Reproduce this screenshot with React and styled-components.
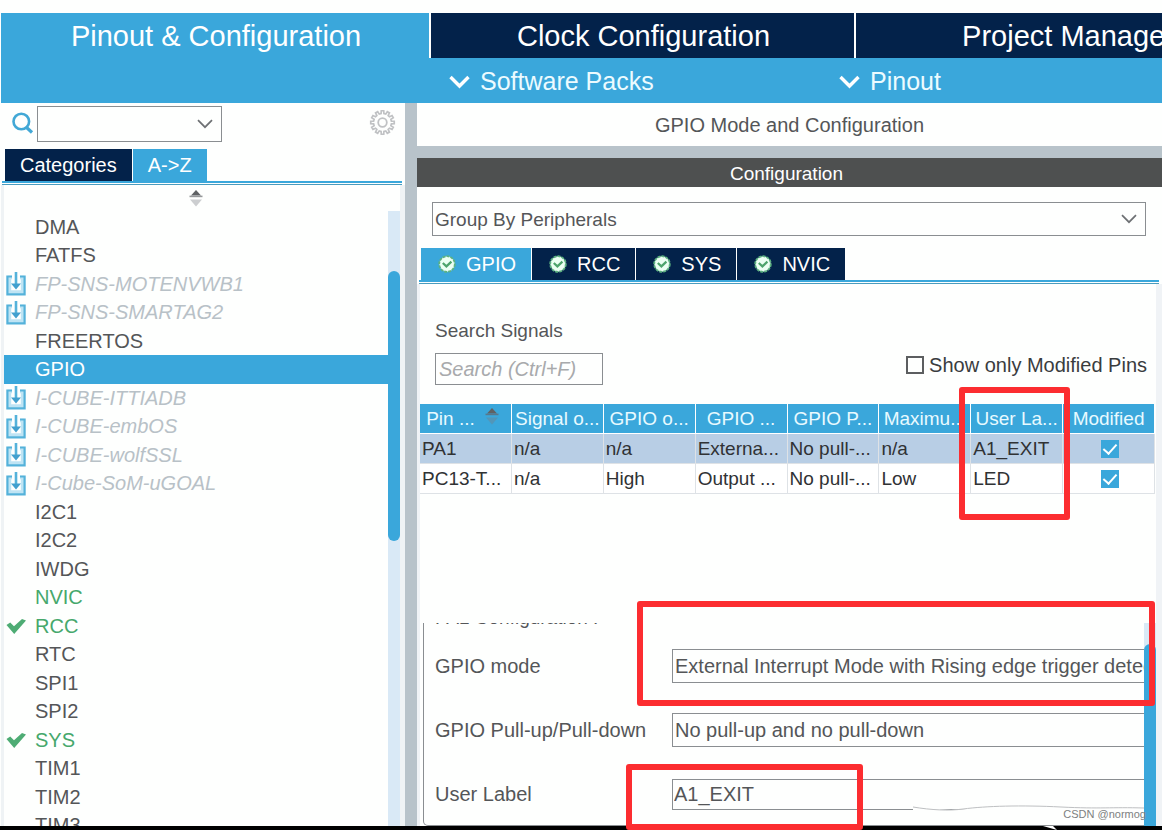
import { useState } from "react";
import styled, { createGlobalStyle, css } from "styled-components";

const BLUE = "rgb(58, 167, 219)";
const NAVY = "rgb(3, 34, 74)";
const GREY_TEXT = "rgb(84, 86, 88)";

const GlobalStyle = createGlobalStyle`
  * {
    box-sizing: border-box;
  }
  body {
    margin: 0;
    overflow: hidden;
    background-color: rgb(254, 255, 254);
  }
  body, button, input, select {
    font-family: "Liberation Sans", Arial, sans-serif;
    font-size: 19px;
    color: ${GREY_TEXT};
  }
  button, input, select {
    margin: 0;
    padding: 0;
    border: 0;
    border-radius: 0;
    background: none;
  }
`;

const Window = styled.div`
  height: 100vh;
  display: flex;
  flex-direction: column;
  padding-top: 13px;
  overflow: hidden;
  position: relative;
`;

const TopTabs = styled.nav`
  display: flex;
  flex-shrink: 0;
  gap: 2px;
  height: 45px;
  padding-left: 1px;
  overflow: hidden;
`;

const TopTab = styled.button`
  flex: 0 0 ${(props) => (props.$active ? "428px" : "423px")};
  padding: 1px 0 0 2px;
  font-size: 29px;
  color: white;
  white-space: nowrap;
  background-color: ${(props) => (props.$active ? BLUE : NAVY)};
`;

const SubBar = styled.div`
  display: flex;
  flex-shrink: 0;
  align-items: center;
  height: 45px;
  margin-left: 1px;
  padding: 2px 0 0 448px;
  background-color: ${BLUE};
`;

const SubMenu = styled.button`
  display: flex;
  flex-shrink: 0;
  align-items: center;
  gap: 10px;
  width: 390px;
  font-size: 25px;
  color: rgb(236, 251, 255);
`;

const Body = styled.div`
  flex: 1;
  min-height: 0;
  display: flex;
`;

const SidePanel = styled.aside`
  flex: 0 0 405px;
  display: flex;
  flex-direction: column;
`;

const SearchRow = styled.div`
  display: flex;
  align-items: center;
  height: 42px;
  padding: 0 9px 0 11px;
`;

const SearchBox = styled.div`
  display: flex;
  align-items: center;
  width: 185px;
  height: 36px;
  margin: 0 auto 0 3px;
  border: 1px solid rgb(138, 142, 145);
  input {
    flex: 1;
    min-width: 0;
    height: 100%;
    padding-left: 4px;
    outline: none;
  }
  button {
    display: flex;
    padding-right: 8px;
  }
`;

const GearButton = styled.button`
  display: flex;
  padding-bottom: 3px;
`;

const SideTabs = styled.div`
  display: flex;
  gap: 1px;
  height: 36px;
  padding: 4px 0 0 5px;
`;

const SideTab = styled.button`
  padding: 0 15px;
  font-size: 20px;
  line-height: 32px;
  color: white;
  background-color: ${(props) => (props.$active ? BLUE : NAVY)};
`;

const TabRule = styled.div`
  flex-shrink: 0;
  height: 4px;
  margin: 0 3px 0 2px;
  border-top: 2px solid ${BLUE};
  border-bottom: 1px solid rgb(74, 156, 190);
`;

const SideBody = styled.div`
  flex: 1;
  min-height: 0;
  display: flex;
  flex-direction: column;
  margin-left: 1px;
  border: solid rgb(239, 243, 245);
  border-width: 0 5px 0 3px;
`;

const SortButton = styled.button`
  display: flex;
  flex-shrink: 0;
  justify-content: center;
  height: 26px;
  padding: 5px 12px 0 0;
`;

const ListArea = styled.div`
  flex: 1;
  min-height: 0;
  display: flex;
`;

const PeripheralList = styled.ul`
  flex: 1;
  display: grid;
  grid-auto-rows: 28px 29px;
  margin: 0;
  padding: 2px 0 0;
  list-style: none;
  overflow: hidden;
`;

const itemKinds = {
  pack: css`
    color: rgb(184, 193, 199);
    font-style: italic;
  `,
  used: css`
    color: rgb(70, 168, 108);
  `,
  selected: css`
    color: white;
    background-color: ${BLUE};
  `,
};

const PeripheralItem = styled.li`
  display: flex;
  align-items: center;
  font-size: 20px;
  white-space: nowrap;
  ${(props) => itemKinds[props.$kind]}
`;

const ItemIcon = styled.span`
  display: flex;
  width: 31px;
  padding-left: 2px;
`;

const ScrollTrack = styled.div`
  flex: 0 0 12px;
  padding-top: ${(props) => props.$offset};
  background-color: rgb(217, 233, 246);
`;

const ScrollThumb = styled.div`
  height: ${(props) => props.$size};
  border-radius: 6px;
  background-color: ${BLUE};
`;

const Splitter = styled.div`
  flex: 0 0 12px;
  background-color: rgb(184, 195, 202);
`;

const MainPanel = styled.main`
  flex: 1;
  min-width: 0;
  display: flex;
  flex-direction: column;
`;

const ModeTitle = styled.div`
  height: 55px;
  padding-top: 1px;
  border-bottom: 12px solid rgb(184, 195, 202);
  font-size: 20px;
  line-height: 43px;
  text-align: center;
`;

const SectionTitle = styled.div`
  height: 29px;
  padding-right: 6px;
  line-height: 31px;
  text-align: center;
  color: white;
  background-color: rgb(78, 80, 80);
`;

const GroupRow = styled.div`
  padding: 15px 16px 12px 15px;
`;

const SelectBox = styled.div`
  display: flex;
  align-items: center;
  height: 34px;
  padding-right: 8px;
  border: 1px solid rgb(138, 142, 145);
  select {
    flex: 1;
    min-width: 0;
    height: 100%;
    padding-left: 2px;
    appearance: none;
    outline: none;
  }
  svg {
    flex-shrink: 0;
  }
`;

const ConfigTabs = styled.div`
  display: flex;
  gap: 1px;
  padding-left: 4px;
`;

const ConfigTab = styled.button`
  display: flex;
  align-items: center;
  gap: 10px;
  height: 32px;
  padding: 0 15px 0 17px;
  font-size: 20px;
  color: white;
  background-color: ${(props) => (props.$active ? BLUE : NAVY)};
`;

const ConfigBody = styled.div`
  flex: 1;
  min-height: 0;
  display: flex;
  flex-direction: column;
  border: solid rgb(240, 243, 246);
  border-width: 0 6px 0 3px;
`;

const FilterRow = styled.div`
  display: flex;
  justify-content: space-between;
  align-items: flex-end;
  padding: 35px 9px 19px 15px;
`;

const SearchSignals = styled.label`
  display: flex;
  flex-direction: column;
  gap: 11px;
  line-height: 23px;
  input {
    width: 168px;
    height: 32px;
    padding-left: 3px;
    border: 1px solid rgb(138, 142, 145);
    font-size: 20px;
    font-style: italic;
    outline: none;
  }
  input::placeholder {
    color: rgb(168, 170, 172);
  }
`;

const OnlyModified = styled.label`
  display: flex;
  align-items: center;
  gap: 5px;
  padding-bottom: 8px;
  font-size: 20px;
  line-height: 24px;
  color: rgb(58, 60, 62);
`;

const CheckBox = styled.input`
  appearance: none;
  display: inline-flex;
  justify-content: center;
  align-items: center;
  width: 18px;
  height: 18px;
  border: 2px solid rgb(92, 94, 96);
  vertical-align: middle;
  &:checked {
    padding-bottom: 3px;
    border-color: ${BLUE};
    background-color: ${BLUE};
  }
  &:checked::after {
    content: "";
    width: 6px;
    height: 11px;
    flex-shrink: 0;
    border: solid white;
    border-width: 0 2px 2px 0;
    transform: rotate(42deg);
  }
`;

const PinTable = styled.table`
  width: calc(100% - 1px);
  table-layout: fixed;
  border-collapse: separate;
  border-spacing: 0;
  color: rgb(48, 50, 52);
  th, td {
    height: 30px;
    padding: 0 0 0 2px;
    text-align: left;
    font-weight: normal;
    line-height: 28px;
    white-space: nowrap;
    overflow: hidden;
  }
  th {
    padding: 1px 0 0;
    border-right: 1px solid white;
    border-bottom: 1px solid white;
    text-align: center;
    color: rgb(232, 250, 255);
    background-color: ${BLUE};
  }
  td {
    border-right: 1px solid rgb(222, 226, 230);
    border-bottom: 1px solid rgb(222, 226, 230);
  }
  td:last-child {
    text-align: center;
  }
`;

const PinRow = styled.tr`
  background-color: ${(props) => (props.$selected ? "rgb(184, 206, 229)" : "white")};
`;

const HeadLabel = styled.span`
  display: flex;
  justify-content: center;
  gap: 10px;
  padding-right: 6px;
  svg {
    margin-top: 3px;
  }
`;

const DetailArea = styled.div`
  flex: 1;
  min-height: 0;
  display: flex;
  margin-top: 129px;
  overflow: hidden;
`;

const DetailScroll = styled.div`
  flex: 1;
  min-width: 0;
  display: flex;
  padding-left: 3px;
  overflow: hidden;
`;

const Fieldset = styled.fieldset`
  flex: 0 0 900px;
  min-width: 0;
  height: 203px;
  margin: 0;
  padding: 0 0 0 11px;
  border: 1px solid rgb(138, 142, 145);
  border-top: 0;
  border-radius: 0 0 5px 5px;
  legend {
    float: left;
    width: 100%;
    height: 26px;
    margin-top: -16px;
    padding: 0;
    line-height: 22px;
  }
`;

const FieldGrid = styled.div`
  clear: both;
  display: grid;
  grid-template-columns: 237px 1fr;
  grid-auto-rows: 34px;
  row-gap: 30px;
  align-items: center;
  padding-top: 16px;
  font-size: 20px;
  select {
    font-size: 20px;
  }
`;

const TextField = styled.input`
  height: 31px;
  padding-left: 1px;
  border: 1px solid rgb(138, 142, 145);
  font-size: 20px;
  outline: none;
`;

const Marker = styled.div`
  position: absolute;
  top: ${(props) => props.$top};
  left: ${(props) => props.$left};
  width: ${(props) => props.$width};
  height: ${(props) => props.$height};
  border: 6px solid rgb(252, 45, 48);
  border-radius: 3px;
  pointer-events: none;
`;

const Smudge = styled.svg`
  position: absolute;
  right: 17px;
  bottom: 0;
  pointer-events: none;
`;

const Watermark = styled.div`
  position: absolute;
  right: 16px;
  bottom: 8px;
  font-size: 11px;
  line-height: 16px;
  color: rgb(125, 127, 129);
`;

const BottomEdge = styled.div`
  flex: 0 0 4px;
  background-color: black;
`;

function ChevronIcon({ heavy }) {
  return heavy ? (
    <svg width="21" height="14" viewBox="0 0 21 14" fill="none" stroke="white" strokeWidth="3.4">
      <path d="M1.5 2 L10.5 11 L19.5 2" />
    </svg>
  ) : (
    <svg width="16" height="10" viewBox="0 0 16 10" fill="none" stroke="rgb(110,113,116)" strokeWidth="1.7">
      <path d="M1 1.2 L8 8.2 L15 1.2" />
    </svg>
  );
}

function SearchIcon() {
  return (
    <svg width="23" height="24" viewBox="0 0 23 24" fill="none">
      <circle cx="10.3" cy="9.5" r="7.8" stroke="rgb(66,168,214)" strokeWidth="2.6" />
      <path d="M15 15 L21 20.5" stroke="rgb(66,168,214)" strokeWidth="3.2" />
    </svg>
  );
}

function gearPath(teeth, inner, outer, c) {
  const step = (Math.PI * 2) / teeth;
  const points = [];
  for (let i = 0; i < teeth; i++) {
    [[-0.3, inner], [-0.2, outer], [0.2, outer], [0.3, inner]].forEach(([k, r]) => {
      const a = (i + k) * step - Math.PI / 2;
      points.push(`${(c + r * Math.cos(a)).toFixed(2)} ${(c + r * Math.sin(a)).toFixed(2)}`);
    });
  }
  return `M${points.join("L")}Z`;
}

function GearIcon() {
  return (
    <svg width="27" height="27" viewBox="0 0 27 27" fill="none" stroke="rgb(192,194,196)">
      <path d={gearPath(12, 9, 11.8, 13.5)} strokeWidth="1.7" />
      <circle cx="13.5" cy="13.5" r="4.3" strokeWidth="1.8" />
    </svg>
  );
}

function SortIcon({ faded }) {
  return (
    <svg width="14" height="17" viewBox="0 0 14 17">
      <path d="M7 0 L12 5.5 H2 Z" fill="rgb(95,98,100)" />
      <path d="M0.5 6.4 H13.5" stroke={faded ? "rgb(88,120,140)" : "rgb(150,152,154)"} strokeWidth="1.6" />
      <path d="M1 9.5 H13 L7 16.5 Z" fill={faded ? "rgb(82,150,184)" : "rgb(204,206,208)"} />
    </svg>
  );
}

function InstallIcon() {
  return (
    <svg width="20" height="24" viewBox="0 0 20 24" fill="none">
      <path d="M6 5.5 H3.5 V20 H16.5 V5.5 H14" stroke="rgb(190,228,244)" strokeWidth="3.4" />
      <path d="M6 4.5 H1.4 V22.4 H18.6 V4.5 H14" stroke="rgb(84,178,218)" strokeWidth="2.2" />
      <path d="M10 0 V14" stroke="rgb(84,178,218)" strokeWidth="2.6" />
      <path d="M5 11.5 L10 17.5 L15 11.5 Z" fill="rgb(66,160,206)" />
    </svg>
  );
}

function TickIcon() {
  return (
    <svg width="20" height="15" viewBox="0 0 20 15">
      <path d="M0.5 6 L4.2 3.5 L8 7.2 L16 0 L20 1.4 L8.2 15 Z" fill="rgb(78,172,116)" />
    </svg>
  );
}

function StatusIcon() {
  return (
    <svg width="18" height="18" viewBox="0 0 18 18">
      <circle cx="9" cy="9" r="7.8" fill="rgb(236,255,243)" stroke="rgb(92,178,128)" strokeWidth="1.8" strokeDasharray="3 1" />
      <path d="M4.8 8 L8.4 11.4 L13.4 6.6" fill="none" stroke="rgb(78,164,108)" strokeWidth="2.2" />
    </svg>
  );
}

const peripherals = [
  { name: "DMA" },
  { name: "FATFS" },
  { name: "FP-SNS-MOTENVWB1", kind: "pack" },
  { name: "FP-SNS-SMARTAG2", kind: "pack" },
  { name: "FREERTOS" },
  { name: "GPIO" },
  { name: "I-CUBE-ITTIADB", kind: "pack" },
  { name: "I-CUBE-embOS", kind: "pack" },
  { name: "I-CUBE-wolfSSL", kind: "pack" },
  { name: "I-Cube-SoM-uGOAL", kind: "pack" },
  { name: "I2C1" },
  { name: "I2C2" },
  { name: "IWDG" },
  { name: "NVIC", kind: "used" },
  { name: "RCC", kind: "used", tick: true },
  { name: "RTC" },
  { name: "SPI1" },
  { name: "SPI2" },
  { name: "SYS", kind: "used", tick: true },
  { name: "TIM1" },
  { name: "TIM2" },
  { name: "TIM3" },
];

const columns = ["Signal o...", "GPIO o...", "GPIO ...", "GPIO P...", "Maximu...", "User La...", "Modified"];

const pins = [
  ["PA1", "n/a", "n/a", "Externa...", "No pull-...", "n/a", "A1_EXIT"],
  ["PC13-T...", "n/a", "High", "Output ...", "No pull-...", "Low", "LED"],
];

function PeripheralPanel() {
  const [selected, setSelected] = useState("GPIO");
  return (
    <SidePanel>
      <SearchRow>
        <SearchIcon />
        <SearchBox>
          <input aria-label="Search peripherals" />
          <button aria-label="Search history">
            <ChevronIcon />
          </button>
        </SearchBox>
        <GearButton aria-label="Settings">
          <GearIcon />
        </GearButton>
      </SearchRow>
      <SideTabs>
        <SideTab>Categories</SideTab>
        <SideTab $active>A-&gt;Z</SideTab>
      </SideTabs>
      <TabRule />
      <SideBody>
        <SortButton aria-label="Sort">
          <SortIcon />
        </SortButton>
        <ListArea>
          <PeripheralList>
            {peripherals.map(({ name, kind, tick }) => (
              <PeripheralItem
                key={name}
                $kind={name === selected ? "selected" : kind}
                onClick={() => setSelected(name)}
              >
                <ItemIcon>
                  {kind === "pack" && <InstallIcon />}
                  {tick && <TickIcon />}
                </ItemIcon>
                {name}
              </PeripheralItem>
            ))}
          </PeripheralList>
          <ScrollTrack $offset="60px">
            <ScrollThumb $size="270px" />
          </ScrollTrack>
        </ListArea>
      </SideBody>
    </SidePanel>
  );
}

function PinDetails() {
  return (
    <DetailArea>
      <DetailScroll>
        <Fieldset>
          <legend>PA1 Configuration :</legend>
          <FieldGrid>
            <label htmlFor="mode">GPIO mode</label>
            <SelectBox>
              <select id="mode">
                <option>External Interrupt Mode with Rising edge trigger detection</option>
              </select>
              <ChevronIcon />
            </SelectBox>
            <label htmlFor="pull">GPIO Pull-up/Pull-down</label>
            <SelectBox>
              <select id="pull">
                <option>No pull-up and no pull-down</option>
              </select>
              <ChevronIcon />
            </SelectBox>
            <label htmlFor="user-label">User Label</label>
            <TextField id="user-label" defaultValue="A1_EXIT" />
          </FieldGrid>
        </Fieldset>
      </DetailScroll>
      <ScrollTrack $offset="21px">
        <ScrollThumb $size="400px" />
      </ScrollTrack>
    </DetailArea>
  );
}

function App() {
  const [tab, setTab] = useState("GPIO");
  return (
    <Window>
      <GlobalStyle />
      <TopTabs>
        <TopTab $active>Pinout &amp; Configuration</TopTab>
        <TopTab>Clock Configuration</TopTab>
        <TopTab>Project Manager</TopTab>
      </TopTabs>
      <SubBar>
        <SubMenu>
          <ChevronIcon heavy />
          Software Packs
        </SubMenu>
        <SubMenu>
          <ChevronIcon heavy />
          Pinout
        </SubMenu>
      </SubBar>
      <Body>
        <PeripheralPanel />
        <Splitter />
        <MainPanel>
          <ModeTitle>GPIO Mode and Configuration</ModeTitle>
          <SectionTitle>Configuration</SectionTitle>
          <GroupRow>
            <SelectBox>
              <select aria-label="Grouping">
                <option>Group By Peripherals</option>
              </select>
              <ChevronIcon />
            </SelectBox>
          </GroupRow>
          <ConfigTabs>
            {["GPIO", "RCC", "SYS", "NVIC"].map((name) => (
              <ConfigTab key={name} $active={name === tab} onClick={() => setTab(name)}>
                <StatusIcon />
                {name}
              </ConfigTab>
            ))}
          </ConfigTabs>
          <TabRule />
          <ConfigBody>
            <FilterRow>
              <SearchSignals>
                Search Signals
                <input placeholder="Search (Ctrl+F)" />
              </SearchSignals>
              <OnlyModified>
                <CheckBox type="checkbox" />
                Show only Modified Pins
              </OnlyModified>
            </FilterRow>
            <PinTable>
              <thead>
                <tr>
                  <th>
                    <HeadLabel>
                      Pin ...
                      <SortIcon faded />
                    </HeadLabel>
                  </th>
                  {columns.map((name, i) => (
                    <th key={i}>{name}</th>
                  ))}
                </tr>
              </thead>
              <tbody>
                {pins.map((pin, i) => (
                  <PinRow key={pin[0]} $selected={i === 0}>
                    {pin.map((value, k) => (
                      <td key={k}>{value}</td>
                    ))}
                    <td>
                      <CheckBox type="checkbox" defaultChecked aria-label={`${pin[0]} modified`} />
                    </td>
                  </PinRow>
                ))}
              </tbody>
            </PinTable>
            <PinDetails />
          </ConfigBody>
        </MainPanel>
      </Body>
      <BottomEdge />
      <Smudge width="234" height="26" viewBox="0 0 234 26" fill="none">
        <path d="M2 3 L40 6 L100 2 L233 4 V12 L150 20 H2 Z" fill="rgb(254,255,254)" />
        <path d="M2 3 C20 6 38 7 52 5 C75 2 110 1 150 3 S200 3 233 4" stroke="rgb(190,192,194)" />
        <path d="M132 22 L146 26 L142 22 Z" fill="white" />
      </Smudge>
      <Watermark>CSDN @normog</Watermark>
      <Marker $top="387px" $left="959px" $width="111px" $height="133px" />
      <Marker $top="601px" $left="637px" $width="518px" $height="105px" />
      <Marker $top="764px" $left="626px" $width="237px" $height="66px" />
    </Window>
  );
}

export default App;
